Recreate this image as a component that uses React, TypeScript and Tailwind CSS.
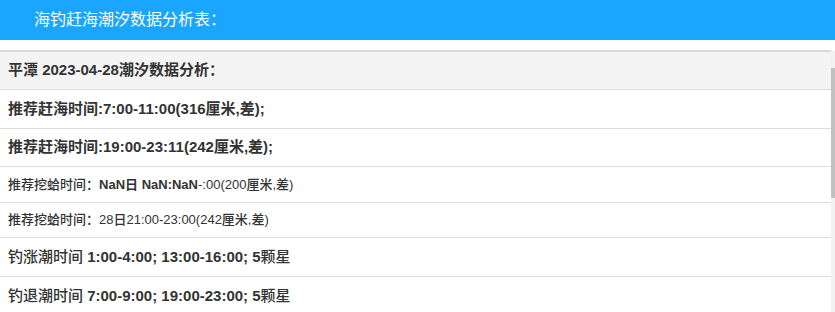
import React from 'react';

const font = { fontFamily: '"Liberation Sans", "Noto Sans CJK SC", sans-serif' };

type Row = { h: string; content: React.ReactNode; size: string };

export default function App() {
  const rows: Row[] = [
    { h: 'h-[39px]', size: 'text-[15px] font-bold', content: '推荐赶海时间:7:00-11:00(316厘米,差);' },
    { h: 'h-[38px]', size: 'text-[15px] font-bold', content: '推荐赶海时间:19:00-23:11(242厘米,差);' },
    {
      h: 'h-[36px]',
      size: 'text-[13px] font-medium',
      content: (
        <>
          推荐挖蛤时间：<b>NaN日 NaN:NaN</b>-:00(200厘米,差)
        </>
      )
    },
    { h: 'h-[35px]', size: 'text-[13px] font-medium', content: '推荐挖蛤时间：28日21:00-23:00(242厘米,差)' },
    {
      h: 'h-[39px]',
      size: 'text-[15px] font-medium',
      content: (
        <>
          钓涨潮时间 <b>1:00-4:00; 13:00-16:00; 5</b>颗星
        </>
      )
    },
    {
      h: 'h-[39px]',
      size: 'text-[15px] font-medium',
      content: (
        <>
          钓退潮时间 <b>7:00-9:00; 19:00-23:00; 5</b>颗星
        </>
      )
    }
  ];

  return (
    <div className="w-[835px] h-[312px] overflow-hidden bg-white text-[#333]" style={font}>
      <div className="h-10 bg-[#1aa5fe] flex items-center pl-[34px] text-white text-[16px]">
        海钓赶海潮汐数据分析表：
      </div>

      <div className="mt-[10px] flex h-[262px]">
        <div className="flex-1 border-t-2 border-[#d9d9d9]">
          <div className="h-[38px] bg-[#f4f4f4] border-b border-[#dddddd] flex items-center px-2 text-[15px] font-bold">
            平潭 2023-04-28潮汐数据分析：
          </div>
          {rows.map((row, i) => (
            <div key={i} className={`${row.h} border-b border-[#dddddd] flex items-center px-2 ${row.size}`}>
              <span>{row.content}</span>
            </div>
          ))}
        </div>

        {/* scrollbar */}
        <div className="w-1 bg-[#f1f1f1] mt-px">
          <div className="mt-[17px] h-[130px] bg-[#c1c1c1]" />
        </div>
      </div>
    </div>
  );
}
